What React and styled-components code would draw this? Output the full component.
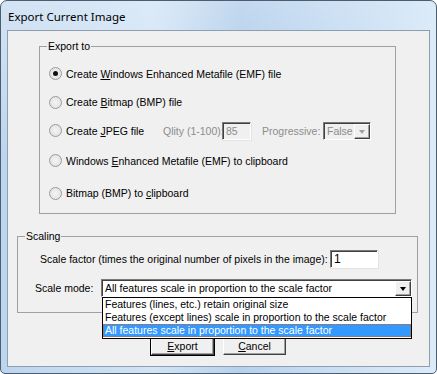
import styled, { createGlobalStyle } from "styled-components";

const GlobalStyle = createGlobalStyle`
  html, body {
    margin: 0;
    padding: 0;
    background: #ffffff;
  }
`;

const Window = styled.div`
  box-sizing: border-box;
  width: 437px;
  height: 374px;
  display: flex;
  flex-direction: column;
  padding: 0 6px 6px 6px;
  border: 1px solid #4d5d6d;
  border-radius: 7px 7px 5px 5px;
  background:
    linear-gradient(160deg, rgba(255, 255, 255, 0.35) 0%, rgba(255, 255, 255, 0) 30%),
    linear-gradient(to right, #bcd5ee 0%, #d2e4f6 35%, #b7d1ec 55%, #c9def3 75%, #dcebf8 100%);
  font-family: "Liberation Sans", Arial, sans-serif;
  font-size: 10.5px;
  color: #000;
`;

const TitleBar = styled.div`
  height: 28px;
  display: flex;
  align-items: center;
  padding: 1px 0 0 1px;
  font-family: "Noto Sans", "Open Sans", sans-serif;
  font-size: 11.5px;
  color: #000;
`;

const Client = styled.div`
  flex: 1;
  display: flex;
  flex-direction: column;
  background: #f0f0f0;
  border: 1px solid #8e9db0;
`;

const GroupBox = styled.div`
  position: relative;
  box-sizing: border-box;
  height: ${(p) => p.$height}px;
  margin: ${(p) => p.$margin};
  border: 1px solid #a0a0a0;
`;

const Caption = styled.span`
  position: absolute;
  top: -8px;
  left: 7px;
  padding: 0 1px;
  background: #f0f0f0;
  line-height: 14px;
`;

const RadioRow = styled.div`
  display: flex;
  align-items: center;
  height: ${(p) => p.$height}px;
  padding-left: 9px;
`;

const Radio = styled.span`
  box-sizing: border-box;
  width: 13px;
  height: 13px;
  border-radius: 50%;
  border: 1px solid #9a9a9a;
  background: radial-gradient(circle at 50% 50%, #f4f4f4 0%, #e4e4e4 70%, #d6d6d6 100%);
  display: flex;
  align-items: center;
  justify-content: center;
  margin-right: 4px;
  flex-shrink: 0;

  &::after {
    content: "";
    width: 5px;
    height: 5px;
    border-radius: 50%;
    background: ${(p) => (p.$checked ? "#111" : "transparent")};
  }
`;

const Label = styled.span`
  white-space: nowrap;
  flex-shrink: 0;
  width: ${(p) => (p.$width ? `${p.$width}px` : "auto")};
  color: ${(p) => (p.$dim ? "#8c8c8c" : "#000")};
`;

const TextBox = styled.div`
  box-sizing: border-box;
  width: ${(p) => p.$width}px;
  height: 18px;
  flex-shrink: 0;
  background: ${(p) => (p.$disabled ? "#f0f0f0" : "#fff")};
  color: ${(p) => (p.$disabled ? "#8c8c8c" : "#000")};
  border-top: 1px solid #7a7a7a;
  border-left: 1px solid #7a7a7a;
  border-right: 1px solid #fff;
  border-bottom: 1px solid #fff;
  box-shadow: inset 1px 1px 0 #404040, 1px 1px 0 #e3e3e3;
  padding: 2px 0 0 3px;
  line-height: 13px;
  font-size: ${(p) => p.$size || 10.5}px;
`;

const ComboBox = styled.div`
  box-sizing: border-box;
  display: flex;
  align-items: stretch;
  flex-shrink: 0;
  width: ${(p) => p.$width}px;
  height: 18px;
  background: ${(p) => (p.$disabled ? "#f0f0f0" : "#fff")};
  color: ${(p) => (p.$disabled ? "#8c8c8c" : "#000")};
  border-top: 1px solid #7a7a7a;
  border-left: 1px solid #7a7a7a;
  border-right: 1px solid #fff;
  border-bottom: 1px solid #fff;
  box-shadow: inset 1px 1px 0 #404040;
`;

const ComboText = styled.span`
  flex: 1;
  padding: 1px 0 0 3px;
  line-height: 14px;
  white-space: nowrap;
  overflow: hidden;
`;

const ComboButton = styled.span`
  box-sizing: border-box;
  width: 16px;
  margin: 1px 0 0 0;
  background: #f0f0f0;
  border-top: 1px solid #fff;
  border-left: 1px solid #fff;
  border-right: 1px solid #404040;
  border-bottom: 1px solid #404040;
  box-shadow: inset -1px -1px 0 #a0a0a0;
  display: flex;
  align-items: center;
  justify-content: center;

  &::after {
    content: "";
    width: 0;
    height: 0;
    border-left: 3.5px solid transparent;
    border-right: 3.5px solid transparent;
    border-top: 4px solid ${(p) => (p.$disabled ? "#a0a0a0" : "#000")};
    margin-top: 1px;
  }
`;

const FieldRow = styled.div`
  display: flex;
  align-items: center;
  padding-left: ${(p) => p.$indent}px;
  margin-top: ${(p) => p.$top}px;
`;

const ComboWrap = styled.div`
  position: relative;
`;

const DropList = styled.div`
  position: absolute;
  top: 18px;
  left: 1px;
  width: 310px;
  box-sizing: border-box;
  background: #fff;
  border: 1px solid #000;
  padding: 0 0 1px 0;
  z-index: 5;
`;

const DropItem = styled.div`
  height: 13px;
  line-height: 13px;
  padding-left: 2px;
  white-space: nowrap;
  box-sizing: border-box;
  background: ${(p) => (p.$active ? "#3399ff" : "transparent")};
  color: ${(p) => (p.$active ? "#fff" : "#000")};
  outline: ${(p) => (p.$active ? "1px dotted #e06000" : "none")};
  outline-offset: -1px;
`;

const ButtonRow = styled.div`
  display: flex;
  justify-content: center;
  gap: 9px;
  margin-top: 23px;
`;

const Button = styled.div`
  box-sizing: border-box;
  width: 63px;
  height: 19px;
  display: flex;
  align-items: center;
  justify-content: center;
  background: #f0f0f0;
  border-top: 1px solid #fff;
  border-left: 1px solid #fff;
  border-right: 1px solid #404040;
  border-bottom: 1px solid #404040;
  box-shadow: inset -1px -1px 0 #a0a0a0, ${(p) => (p.$default ? "0 0 0 1px #000" : "0 0 0 0 transparent")};
`;

const exportOptions = [
  { pre: "Create ", key: "W", post: "indows Enhanced Metafile (EMF) file", height: 27, checked: true },
  { pre: "Create ", key: "B", post: "itmap (BMP) file", height: 30 },
  { pre: "Create ", key: "J", post: "PEG file", height: 27, jpeg: true },
  { pre: "Windows ", key: "E", post: "nhanced Metafile (EMF) to clipboard", height: 33 },
  { pre: "Bitmap (BMP) to ", key: "c", post: "lipboard", height: 32 },
];

const scaleModes = [
  "Features (lines, etc.) retain original size",
  "Features (except lines) scale in proportion to the scale factor",
  "All features scale in proportion to the scale factor",
];

export default function App() {
  return (
    <>
      <GlobalStyle />
      <Window>
        <TitleBar>Export Current Image</TitleBar>
        <Client>
          <GroupBox $height={168} $margin="15px 33px 0 31px">
            <Caption>Export to</Caption>
            <div style={{ height: 13 }} />
            {exportOptions.map((o) => (
              <RadioRow key={o.key} $height={o.height}>
                <Radio $checked={o.checked} />
                <Label $width={o.jpeg ? 97 : undefined}>
                  {o.pre}
                  <u>{o.key}</u>
                  {o.post}
                </Label>
                {o.jpeg && (
                  <>
                    <Label $width={59} $dim>
                      Qlity (1-100):
                    </Label>
                    <TextBox $width={29} $disabled>
                      85
                    </TextBox>
                    <Label $width={61} $dim style={{ marginLeft: 11 }}>
                      Progressive:
                    </Label>
                    <ComboBox $width={48} $disabled>
                      <ComboText>False</ComboText>
                      <ComboButton $disabled />
                    </ComboBox>
                  </>
                )}
              </RadioRow>
            ))}
          </GroupBox>
          <GroupBox $height={77} $margin="22px 11px 0 9px">
            <Caption>Scaling</Caption>
            <FieldRow $indent={22} $top={13}>
              <Label $width={290}>Scale factor (times the original number of pixels in the image):</Label>
              <TextBox $width={48} $size={12}>
                1
              </TextBox>
            </FieldRow>
            <FieldRow $indent={17} $top={11}>
              <Label $width={66}>Scale mode:</Label>
              <ComboWrap>
                <ComboBox $width={311}>
                  <ComboText>All features scale in proportion to the scale factor</ComboText>
                  <ComboButton />
                </ComboBox>
                <DropList>
                  {scaleModes.map((m, i) => (
                    <DropItem key={m} $active={i === 2}>
                      {m}
                    </DropItem>
                  ))}
                </DropList>
              </ComboWrap>
            </FieldRow>
          </GroupBox>
          <ButtonRow>
            <Button $default>
              <span>
                <u>E</u>xport
              </span>
            </Button>
            <Button>
              <span>
                <u>C</u>ancel
              </span>
            </Button>
          </ButtonRow>
        </Client>
      </Window>
    </>
  );
}
